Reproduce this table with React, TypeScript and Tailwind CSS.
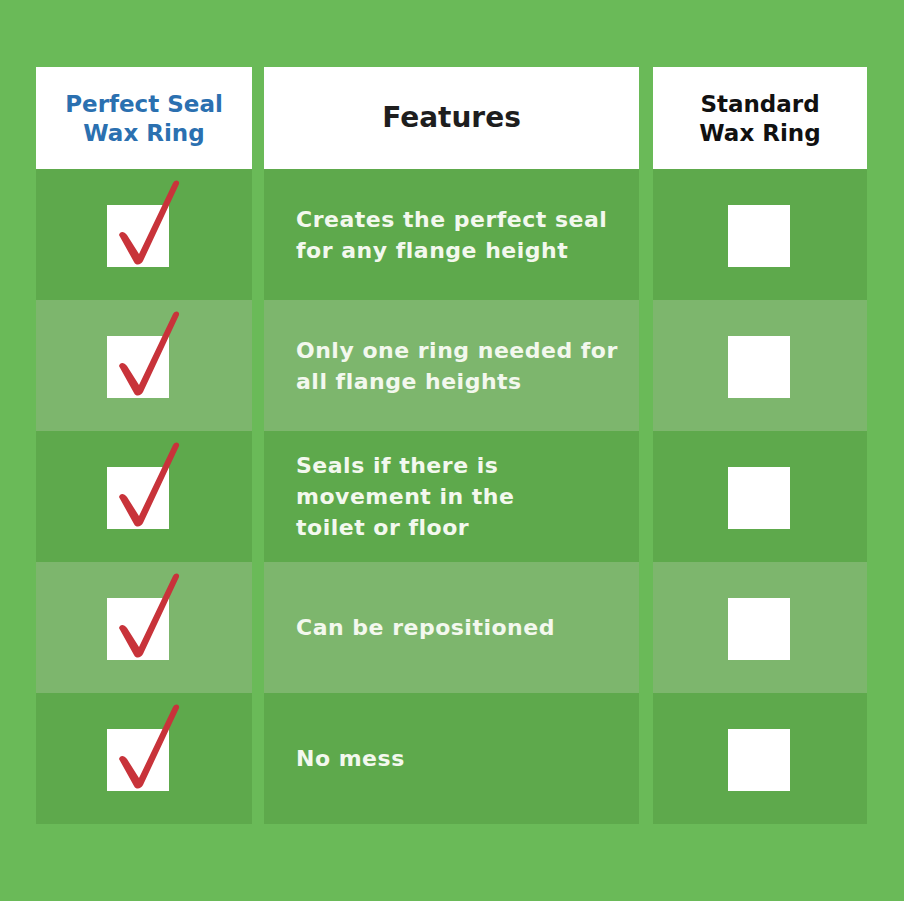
const rows = [
  { lines: ['Creates the perfect seal', 'for any flange height'], tone: 'dark' },
  { lines: ['Only one ring needed for', 'all flange heights'], tone: 'light' },
  { lines: ['Seals if there is', 'movement in the', 'toilet or floor'], tone: 'dark' },
  { lines: ['Can be repositioned'], tone: 'light' },
  { lines: ['No mess'], tone: 'dark' },
];

function CheckedBox() {
  return (
    <div className="relative w-[62px] h-[62px] bg-white">
      <svg className="absolute left-0 top-[-28px]" width="80" height="92" viewBox="0 0 80 92">
        <path
          d="M12 58 C13 54 17 54 20 58 L32 77 L66 6 C68 2 73 3 72 7 L36 84 C34 88 29 89 27 85 Z"
          fill="#c8333a"
        />
      </svg>
    </div>
  );
}

export default function App() {
  return (
    <div className="w-[904px] h-[901px] bg-[#6aba58] pt-[67px] pl-[36px]" style={{ fontFamily: '"DejaVu Sans", sans-serif' }}>
      <div className="grid grid-cols-[216px_12px_375px_14px_214px]">
        {/* header */}
        <div className="h-[102px] bg-white flex flex-col items-center justify-center text-[#2b70b0] text-[23px] leading-[29px] font-semibold pt-[2px]">
          <span>Perfect Seal</span>
          <span>Wax Ring</span>
        </div>
        <div />
        <div className="h-[102px] bg-white flex items-center justify-center text-[#1e1e1e] text-[28px] font-semibold">
          Features
        </div>
        <div />
        <div className="h-[102px] bg-white flex flex-col items-center justify-center text-[#111] text-[23px] leading-[29px] font-semibold pt-[2px]">
          <span>Standard</span>
          <span>Wax Ring</span>
        </div>

        {rows.map((r, i) => {
          const bg = r.tone === 'dark' ? 'bg-[#5ea94c]' : 'bg-[#7db66d]';
          return (
            <div key={i} className="contents">
              <div className={`h-[131px] ${bg} flex items-center justify-center pr-[12px] pt-[2px]`}>
                <CheckedBox />
              </div>
              <div />
              <div className={`h-[131px] ${bg} flex flex-col justify-center pl-[32px] text-[#f3f8ee] text-[22px] tracking-[0.5px] leading-[31px] font-semibold`}>
                {r.lines.map((l) => (
                  <span key={l}>{l}</span>
                ))}
              </div>
              <div />
              <div className={`h-[131px] ${bg} flex items-center justify-center pr-[3px] pt-[2px]`}>
                <div className="w-[62px] h-[62px] bg-white" />
              </div>
            </div>
          );
        })}
      </div>
    </div>
  );
}
